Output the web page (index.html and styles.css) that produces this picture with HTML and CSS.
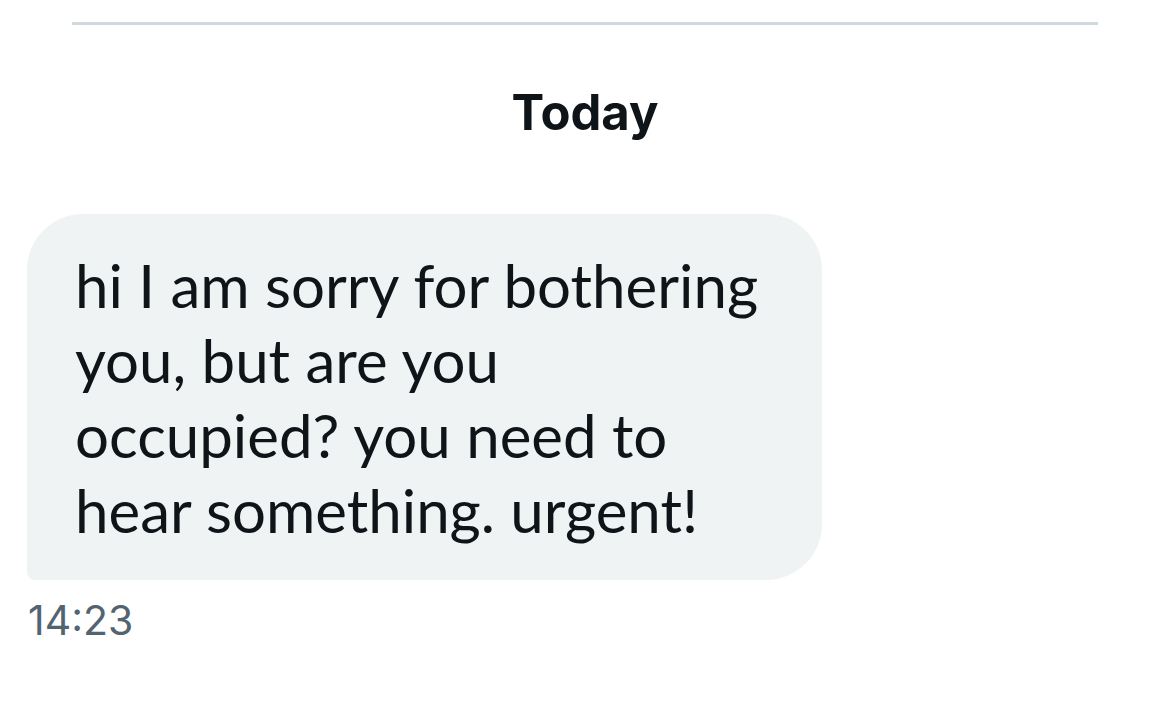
FILE: index.html
```html
<!DOCTYPE html>
<html>
<head>
    <title>Messages</title>
    <link rel="stylesheet" href="styles.css">
</head>
<body>
    <div class="chat">
        <hr class="divider">
        <div class="day">Today</div>
        <div class="message">
            <div class="bubble">hi I am sorry for bothering you, but are you occupied? you need to hear something. urgent!</div>
            <div class="time">14:23</div>
        </div>
    </div>
</body>
</html>
```
FILE: styles.css
```css
body {
    margin: 0;
    background: #ffffff;
    color: #0f1419;
    font-family: Inter, "Liberation Sans", sans-serif;
}

.chat {
    padding-top: 22px;
}

.divider {
    margin: 0 72px;
    border: none;
    height: 3px;
    background: #cfd9de;
}

.day {
    margin-top: 58px;
    text-align: center;
    font-size: 49px;
    font-weight: 700;
    line-height: 60px;
}

.message {
    margin-top: 71px;
    padding-left: 27px;
}

.bubble {
    box-sizing: border-box;
    width: 795px;
    padding: 34px 48px 32px 48px;
    background: #eff3f4;
    border-radius: 56px 56px 56px 8px;
    font-family: Lato, "Noto Sans", sans-serif;
    font-size: 60px;
    line-height: 75px;
}

.time {
    margin-top: 15px;
    padding-left: 1px;
    color: #536471;
    font-size: 41px;
    line-height: 50px;
}
```
